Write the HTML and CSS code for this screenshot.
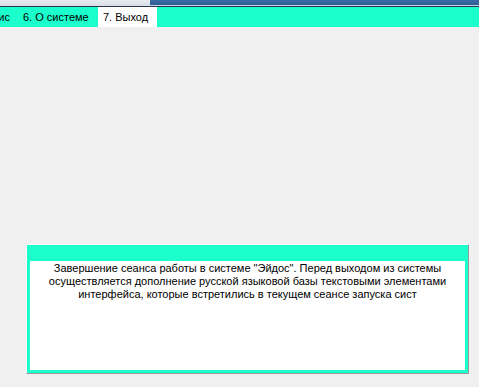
FILE: index.html
```html
<!DOCTYPE html>
<html lang="ru">
<head>
  <meta charset="UTF-8">
  <title>Эйдос — Выход</title>
  <link rel="stylesheet" href="styles.css">
</head>
<body>
  <!-- Window title strip -->
  <div class="title-strip">
    <div class="title-light"></div>
    <div class="title-blue"></div>
  </div>

  <!-- Tabs -->
  <nav class="tabs">
    <span class="tab tab-cut">ис</span>
    <span class="tab tab-about">6. О системе</span>
    <span class="tab tab-active">7. Выход</span>
  </nav>

  <!-- Main area -->
  <main class="workspace">
    <div class="panel">
      <div class="panel-head"></div>
      <div class="panel-body">
        <p class="panel-text">
          Завершение сеанса работы в системе "Эйдос". Перед выходом из системы<br>
          осуществляется дополнение русской языковой базы текстовыми элементами<br>
          интерфейса, которые встретились в текущем сеансе запуска сист
        </p>
      </div>
    </div>
  </main>
</body>
</html>
```

FILE: styles.css
```css
* {
  margin: 0;
  padding: 0;
  box-sizing: border-box;
}

:root {
  --cyan: #1affcc;
  --face: #f0f0f0;
  --ink: #000;
}

body {
  width: 479px;
  height: 387px;
  overflow: hidden;
  background: var(--face);
  font-family: "Liberation Sans", Arial, sans-serif;
  font-size: 11px;
  color: var(--ink);
}

/* Title strip */
.title-strip {
  display: flex;
  height: 7px;
  border-bottom: 1px solid #2a3550;
}

.title-light {
  width: 150px;
  background: linear-gradient(to bottom, #e8ecf2, #d9dee6);
}

.title-blue {
  flex: 1;
  background: linear-gradient(to bottom, #3a6ba3 0, #2f5f95 5px, #c8d4e6 5px, #c8d4e6 6px);
}

/* Tabs */
.tabs {
  display: flex;
  height: 20px;
  background: var(--cyan);
}

.tab {
  display: flex;
  align-items: center;
  flex: none;
  line-height: 20px;
  white-space: nowrap;
}

.tab-cut {
  width: 17px;
  justify-content: flex-end;
  padding-right: 7px;
}

.tab-about {
  width: 81px;
  padding-left: 6px;
}

.tab-active {
  width: 59px;
  padding-left: 5px;
  background: #fff;
}

/* Workspace */
.workspace {
  display: flex;
  flex-direction: column;
  justify-content: flex-end;
  height: 359px;
  padding: 0 10px 12px 26px;
}

.panel {
  display: flex;
  flex-direction: column;
  height: 130px;
  border-left: 1px solid #fafafa;
  border-top: 1px solid #fafafa;
  border-right: 1px solid #9a9a9a;
  border-bottom: 1px solid #9a9a9a;
  background: var(--cyan);
  padding: 0 3px 3px 3px;
}

.panel-head {
  height: 16px;
}

.panel-body {
  flex: 1;
  background: #fff;
  padding-top: 1px;
}

.panel-text {
  text-align: center;
  line-height: 13px;
}
```
